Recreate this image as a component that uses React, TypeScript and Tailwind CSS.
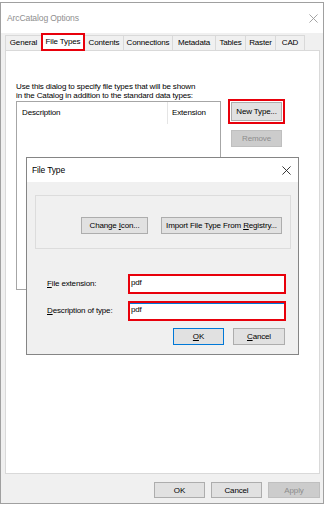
import React from "react";

function Btn({
  children,
  className = "",
  disabled = false,
  primary = false,
}: {
  children: React.ReactNode;
  className?: string;
  disabled?: boolean;
  primary?: boolean;
}) {
  return (
    <div
      className={
        "flex items-center justify-center border text-[8px] leading-[9px] " +
        (disabled
          ? "bg-[#cccccc] border-[#bfbfbf] text-[#8c8c8c] "
          : primary
          ? "bg-[#e1e1e1] border-[#0078d7] text-black "
          : "bg-[#e1e1e1] border-[#adadad] text-black ") +
        className
      }
    >
      {children}
    </div>
  );
}

function XIcon({ color, size }: { color: string; size: number }) {
  return (
    <svg width={size} height={size} viewBox="0 0 10 10">
      <path d="M0.5 0.5 L9.5 9.5 M9.5 0.5 L0.5 9.5" stroke={color} strokeWidth="1" fill="none" />
    </svg>
  );
}

const tabs = [
  { label: "General", w: "w-[37px]" },
  { label: "File Types", w: "w-[44px]", sel: true },
  { label: "Contents", w: "w-[40px]" },
  { label: "Connections", w: "w-[50px]" },
  { label: "Metadata", w: "w-[44px]" },
  { label: "Tables", w: "w-[31px]" },
  { label: "Raster", w: "w-[31px]" },
  { label: "CAD", w: "w-[30px]" },
];

export default function App() {
  return (
    <div className="relative w-[326px] h-[505px] bg-white font-['Liberation_Sans',Arial,sans-serif] text-black tracking-[-0.15px]">
      <div className="mt-[2px] w-[324px] h-[502px] border border-[#a0a0a0] bg-[#f0f0f0] flex flex-col">
        {/* Title bar */}
        <div className="h-[30px] bg-white flex items-center justify-between pl-[6px] pr-[5px]">
          <span className="text-[8.6px] text-[#8f8f8f]">ArcCatalog Options</span>
          <XIcon color="#9a9a9a" size={9} />
        </div>
        {/* Tabs */}
        <div className="h-[18px] ml-[4px] flex items-end">
          {tabs.map((t) =>
            t.sel ? (
              <div
                key={t.label}
                className={
                  "relative z-10 -ml-px h-[18px] bg-white border-2 border-[#e8000b] flex items-center justify-center text-[8px] " +
                  t.w
                }
              >
                {t.label}
              </div>
            ) : (
              <div
                key={t.label}
                className={
                  "-ml-px first:ml-0 h-[16px] bg-[#f0f0f0] border border-[#d9d9d9] flex items-center justify-center text-[8px] pb-px " +
                  t.w
                }
              >
                {t.label}
              </div>
            )
          )}
        </div>
        {/* Panel */}
        <div className="-mt-px ml-[4px] w-[315px] h-[424px] bg-white border border-[#d9d9d9] pt-[31px] pl-[10px]">
          <div className="text-[8px] leading-[9px]">
            <div>Use this dialog to specify file types that will be shown</div>
            <div>in the Catalog in addition to the standard data types:</div>
          </div>
          <div className="mt-px flex items-start">
            <div className="w-[205px] h-[189px] border border-[#a6a6a6] bg-white">
              <div className="h-[22px] flex text-[8px]">
                <div className="w-[151px] pl-[5px] flex items-center border-r border-[#e5e5e5]">Description</div>
                <div className="pl-[4px] flex items-center">Extension</div>
              </div>
            </div>
            <div className="ml-[10px] flex flex-col">
              <Btn className="mt-px w-[51px] h-[19px] outline-2 outline-[#e8000b] outline-offset-[1px]">
                New Type...
              </Btn>
              <Btn disabled className="mt-[9px] w-[51px] h-[17px]">
                Remove
              </Btn>
            </div>
          </div>
        </div>
        {/* Bottom buttons */}
        <div className="mt-[8px] flex justify-end gap-[6px] pr-[3px]">
          <Btn className="w-[51px] h-[16px]">OK</Btn>
          <Btn className="w-[51px] h-[16px]">Cancel</Btn>
          <Btn disabled className="w-[52px] h-[16px]">
            Apply
          </Btn>
        </div>
      </div>

      {/* File Type dialog */}
      <div className="absolute left-[26px] top-[155px] w-[273px] h-[198px] border border-[#858585] bg-[#f0f0f0] flex flex-col">
        <div className="h-[24px] bg-white flex items-center justify-between pl-[5px] pr-[7px]">
          <span className="text-[8.5px]">File Type</span>
          <XIcon color="#222" size={9} />
        </div>
        <div className="mt-[13px] ml-[8px] w-[256px] h-[54px] border border-[#dcdcdc] flex justify-end items-start pt-[21px] pr-[8px] gap-[13px]">
          <Btn className="w-[67px] h-[17px]">
            <span>
              Change <span className="underline">I</span>con...
            </span>
          </Btn>
          <Btn className="w-[121px] h-[17px]">
            <span>
              Import File Type From <span className="underline">R</span>egistry...
            </span>
          </Btn>
        </div>
        <div className="mt-[25px] pl-[20px] flex items-center">
          <div className="w-[81px] text-[8px]">
            <span className="underline">F</span>ile extension:
          </div>
          <div className="w-[158px] h-[20px] border-2 border-[#e8000b] bg-white pl-[1px] pt-[1px] text-[8px] leading-[11px]">
            pdf
          </div>
        </div>
        <div className="mt-[7px] pl-[20px] flex items-center">
          <div className="w-[81px] text-[8px]">
            <span className="underline">D</span>escription of type:
          </div>
          <div className="w-[158px] h-[20px] border-2 border-[#e8000b] bg-white">
            <div className="h-full border-t border-[#0078d7] pl-[1px] text-[8px] leading-[11px]">pdf</div>
          </div>
        </div>
        <div className="mt-[7px] flex justify-end gap-[9px] pr-[13px]">
          <Btn primary className="w-[51px] h-[17px]">
            <span className="underline">O</span>K
          </Btn>
          <Btn className="w-[52px] h-[17px]">
            <span>
              <span className="underline">C</span>ancel
            </span>
          </Btn>
        </div>
      </div>
    </div>
  );
}
